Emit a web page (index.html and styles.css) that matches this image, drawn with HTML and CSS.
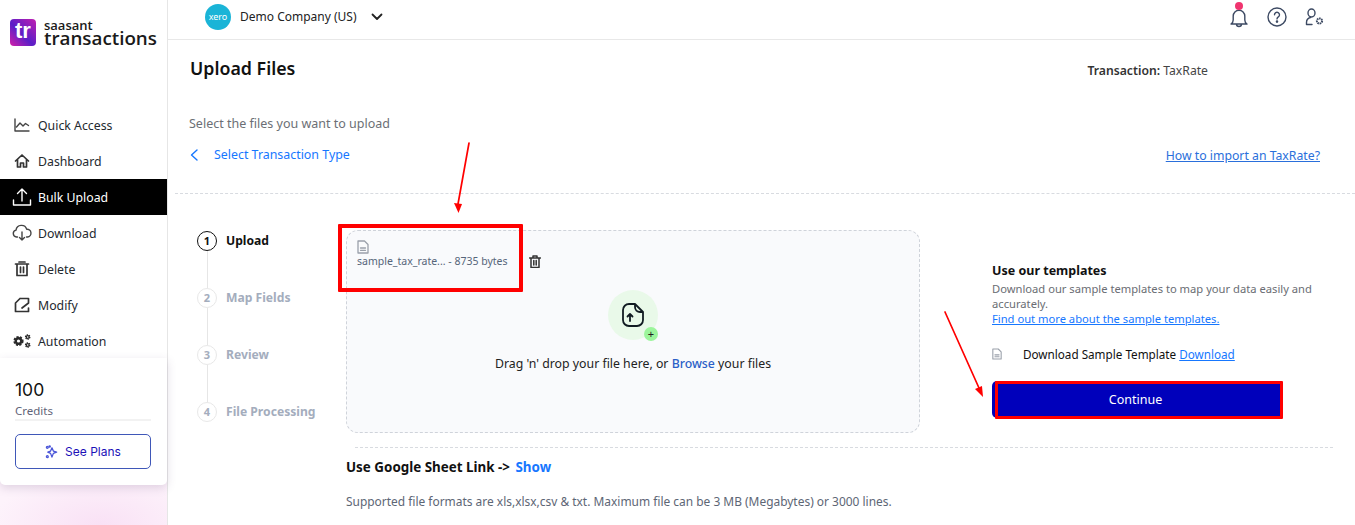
FILE: index.html
```html
<!DOCTYPE html>
<html lang="en">
  <head>
    <meta charset="UTF-8">
    <title>Upload Files</title>
    <link rel="stylesheet" href="styles.css">
  </head>
  <body>
    <aside class="sidebar">
      <div class="logo">
        <div class="logo-mark">tr</div>
        <div class="logo-text">
          <span class="logo-small">saasant</span>
          <span class="logo-big">transactions</span>
        </div>
      </div>
      <nav class="nav">
        <a class="nav-item">
          <svg viewBox="0 0 16 16"><path d="M1 2v12h14M2.5 10l3.5-4 3 3 2.5-2.5 3 2"/></svg>
          Quick Access
        </a>
        <a class="nav-item">
          <svg class="bold" viewBox="0 0 16 16"><path d="M1.5 8 8 2l6.5 6M3.5 6.5V14h3v-4h3v4h3V6.5"/></svg>
          Dashboard
        </a>
        <a class="nav-item active">
          <svg class="big" viewBox="0 0 20 20"><path d="M10 14V2M5.5 6.5 10 2l4.5 4.500M1.5 13v5h17v-5"/></svg>
          Bulk Upload
        </a>
        <a class="nav-item">
          <svg class="big" viewBox="0 0 20 20"><path d="M5.5 14H4.500a3.500 3.500 0 0 1-.5-6.900 5.500 5.500 0 0 1 10.700-.8 3.800 3.800 0 0 1 .8 7.700h-1M10 9v8M7.500 14.500 10 17l2.500-2.500"/></svg>
          Download
        </a>
        <a class="nav-item">
          <svg class="bold" viewBox="0 0 16 16"><path d="M1.5 3h13M3 3v11.500h10V3M5 1h6M6.500 6v5.500M9.500 6v5.500"/></svg>
          Delete
        </a>
        <a class="nav-item">
          <svg class="bold" viewBox="0 0 16 16"><path d="M6 1.500h8.500V6M6 1.500 1.500 6v8.500h13V11M8 11l6.500-5"/></svg>
          Modify
        </a>
        <a class="nav-item">
          <svg class="big gears" viewBox="0 0 20 20">
            <circle class="gear" cx="6.500" cy="10" r="3.900"/>
            <circle class="gear-sm" cx="15.700" cy="6" r="2.100"/>
            <circle class="gear-sm" cx="15.700" cy="14" r="2.100"/>
            <circle class="hole" cx="6.500" cy="10" r="1.600"/>
            <circle class="hole" cx="15.700" cy="6" r=".8"/>
            <circle class="hole" cx="15.700" cy="14" r=".8"/>
          </svg>
          Automation
        </a>
      </nav>
      <div class="credits">
        <div class="credits-num">100</div>
        <div class="credits-label">Credits</div>
        <button class="plans-btn">
          <svg viewBox="0 0 14 14"><path d="M7.500 2.500 9 6l3.500 1.200L9 8.500 7.500 12.500 6 8.500 3 7.200 6 6z"/><circle cx="2.500" cy="2" r="1"/><circle cx="2.500" cy="12" r="1"/><circle cx="5" cy="1" r=".7"/></svg>
          See Plans
        </button>
      </div>
    </aside>

    <div class="page">
      <header class="topbar">
        <div class="company">
          <div class="xero">xero</div>
          <span>Demo Company (US)</span>
          <svg class="chev" viewBox="0 0 12 8"><path d="M1.500 1.500 6 6l4.500-4.500"/></svg>
        </div>
        <div class="top-icons">
          <div class="bell">
            <svg viewBox="0 0 20 22"><path d="M2 18c1.500-1 2.200-2 2.200-4V10a5.800 5.800 0 0 1 11.600 0v4c0 2 .7 3 2.200 4zM7.500 18a2.500 2.500 0 0 0 5 0"/></svg>
            <span class="dot"></span>
          </div>
          <svg class="help" viewBox="0 0 20 20"><circle cx="10" cy="10" r="9"/><path d="M7.500 7.800a2.500 2.500 0 1 1 3.800 2.100c-.9.600-1.300 1-1.300 2"/><circle class="fill" cx="10" cy="14.600" r=".6"/></svg>
          <svg class="user-gear" viewBox="0 0 20 18"><ellipse cx="6.500" cy="5" rx="3.500" ry="4"/><path d="M7 16.500H1.500v-2c0-2.500 1.500-4.500 4-5"/><circle class="gear-ring" cx="14.500" cy="13" r="2.600"/></svg>
        </div>
      </header>

      <main class="content">
        <div class="title-row">
          <h1>Upload Files</h1>
          <div class="txn"><b>Transaction:</b> TaxRate</div>
        </div>
        <p class="hint">Select the files you want to upload</p>
        <div class="back-row">
          <a class="back">
            <svg viewBox="0 0 8 12"><path d="M7 1 1.500 6 7 11"/></svg>
            Select Transaction Type
          </a>
          <a class="howto">How to import an TaxRate?</a>
        </div>

        <div class="work">
          <ol class="steps">
            <li class="step current"><span class="num">1</span>Upload</li>
            <li class="step"><span class="num">2</span>Map Fields</li>
            <li class="step"><span class="num">3</span>Review</li>
            <li class="step"><span class="num">4</span>File Processing</li>
          </ol>

          <div class="dropzone">
            <div class="file-row">
              <div class="file-info">
                <svg class="doc" viewBox="0 0 12 14"><path d="M1 1h6.500L11 4.500V13H1zM3.500 8h5M3.500 10.300h5"/></svg>
                <div class="file-name">sample_tax_rate... - 8735 bytes</div>
              </div>
              <svg class="trash" viewBox="0 0 12 13"><path d="M.5 3h11M2 3v9.500h8V3M4 3V1h4v2M4.800 5.500v4.500M7.200 5.500v4.500"/></svg>
            </div>
            <div class="drop-main">
              <div class="upload-icon">
                <svg viewBox="0 0 22 24"><path d="M7 1h6l8 8v8a6 6 0 0 1-6 6H7a6 6 0 0 1-6-6V7a6 6 0 0 1 6-6zM13 1v3a5 5 0 0 0 5 5h3M8 18v-7M5.500 13.500 8 11l2.500 2.500"/></svg>
                <span class="plus">+</span>
              </div>
              <p class="drop-text">Drag 'n' drop your file here, or <a>Browse</a> your files</p>
            </div>
          </div>

          <div class="templates">
            <h2>Use our templates</h2>
            <p class="tpl-desc">Download our sample templates to map your data easily and accurately.</p>
            <a class="tpl-link">Find out more about the sample templates.</a>
            <div class="tpl-row">
              <svg class="doc" viewBox="0 0 12 14"><path d="M1 1h6.500L11 4.500V13H1zM3.500 8h5M3.500 10.300h5"/></svg>
              <span>Download Sample Template <a>Download</a></span>
            </div>
            <button class="continue">Continue</button>
          </div>
        </div>

        <div class="sheet-block">
          <div class="sheet-link"><b>Use Google Sheet Link -&gt;</b> <a>Show</a></div>
          <p class="formats">Supported file formats are xls,xlsx,csv &amp; txt. Maximum file can be 3 MB (Megabytes) or 3000 lines.</p>
        </div>
      </main>
    </div>

    <!-- red markup drawn on top of the screenshot -->
    <div class="mark mark-file"></div>
    <div class="mark mark-btn"></div>
    <svg class="arrows" viewBox="0 0 1355 525">
      <path d="M469 143 458 204"/>
      <path class="head" d="M454 203l8 1-3.500 9z"/>
      <path d="M945 312 979 388"/>
      <path class="head" d="M975 389l7-3 1 11z"/>
    </svg>
  </body>
</html>
```

FILE: styles.css
```css
* {
  box-sizing: border-box;
}

body {
  margin: 0;
  display: flex;
  height: 525px;
  overflow: hidden;
  font-family: "Noto Sans", "Open Sans", Arial, sans-serif;
  font-size: 12.3px;
  color: #111;
  background: #fff;
}

a {
  cursor: pointer;
}

svg {
  fill: none;
  stroke: currentColor;
  stroke-width: 1.4;
  stroke-linecap: round;
  stroke-linejoin: round;
  flex-shrink: 0;
}

/* sidebar */
.sidebar {
  width: 168px;
  flex-shrink: 0;
  display: flex;
  flex-direction: column;
  border-right: 1px solid #e6e6e6;
  background: radial-gradient(ellipse 120px 60px at 60% 100%, #f9e1f5, #fdf3fb 90%);
}

.logo {
  height: 107px;
  padding: 17px 0 0 10px;
  display: flex;
  gap: 8px;
  background: #fff;
}

.logo-mark {
  width: 26px;
  height: 27px;
  margin-top: 2px;
  border-radius: 4px;
  background: linear-gradient(45deg, #d31fa8, #5a1fc8 45%, #c21fb0);
  color: #fff;
  font-family: "Liberation Sans", sans-serif;
  font-weight: 700;
  font-size: 22px;
  line-height: 24px;
  text-align: center;
}

.logo-text {
  display: flex;
  flex-direction: column;
  font-family: "Open Sans", sans-serif;
  color: #1a1a1a;
}

.logo-small {
  margin-top: 3px;
  font-size: 13px;
  line-height: 10px;
  font-weight: 600;
}

.logo-big {
  font-size: 18.8px;
  line-height: 17px;
  font-weight: 600;
}

.nav {
  background: #fff;
}

.nav-item {
  height: 36px;
  padding-left: 14px;
  display: flex;
  align-items: center;
  gap: 8px;
  color: #24292f;
}

.nav-item svg {
  width: 16px;
  height: 16px;
  color: #444;
}

.nav-item svg.bold {
  stroke-width: 1.7;
  color: #333;
}

.nav-item svg.big {
  width: 20px;
  height: 20px;
  margin-left: -2px;
  margin-right: -2px;
}

.gears .gear {
  fill: #2a2a2a;
  stroke: #2a2a2a;
  stroke-width: 2.4;
  stroke-linecap: butt;
  stroke-dasharray: 2 1.2;
}

.gears .gear-sm {
  fill: #2a2a2a;
  stroke: #2a2a2a;
  stroke-width: 1.4;
  stroke-linecap: butt;
  stroke-dasharray: 1.2 .8;
}

.gears .hole {
  fill: #fff;
  stroke: none;
}

.nav-item.active {
  background: #000;
  color: #fff;
}

.nav-item.active svg {
  color: #fff;
}

.credits {
  height: 127px;
  margin-top: -1px;
  padding: 22px 16px 0 15px;
  background: #fff;
  border-radius: 0 0 5px 5px;
  box-shadow: 0 3px 10px rgba(90, 60, 110, 0.18);
}

.credits-num {
  font-family: Inter, sans-serif;
  font-size: 17.5px;
  line-height: 20px;
}

.credits-label {
  margin-top: 2px;
  border-bottom: 2px solid #f2f2f2;
  font-size: 11.5px;
  line-height: 17px;
  color: #5f6478;
}

.plans-btn {
  width: 136px;
  height: 35px;
  margin-top: 13px;
  padding: 0;
  display: flex;
  align-items: center;
  justify-content: center;
  gap: 7px;
  background: #fff;
  border: 1px solid #3f57b8;
  border-radius: 5px;
  color: #1c12b8;
  font-family: Inter, sans-serif;
  font-size: 12px;
}

.plans-btn svg {
  width: 13px;
  height: 14px;
  color: #4a55d8;
}

/* top bar */
.page {
  flex: 1;
  min-width: 0;
  display: flex;
  flex-direction: column;
}

.topbar {
  height: 40px;
  padding: 0 30px 0 37px;
  display: flex;
  align-items: center;
  justify-content: space-between;
  border-bottom: 1px solid #e8e8e8;
}

.company {
  display: flex;
  align-items: center;
  gap: 9px;
  margin-top: -6px;
  color: #222;
  font-size: 12px;
}

.xero {
  width: 26px;
  height: 26px;
  border-radius: 50%;
  background: #1ab4d7;
  color: #fff;
  font-size: 9px;
  line-height: 25px;
  text-align: center;
}

.chev {
  width: 12px;
  height: 8px;
  margin-left: 5px;
  stroke-width: 1.8;
}

.top-icons {
  display: flex;
  align-items: center;
  gap: 18px;
  margin-top: -6px;
  color: #3d4a63;
}

.bell {
  position: relative;
  width: 20px;
  height: 22px;
}

.bell svg {
  width: 20px;
  height: 22px;
}

.dot {
  position: absolute;
  top: -4px;
  left: 6px;
  width: 8px;
  height: 8px;
  border-radius: 50%;
  background: #f0346f;
}

.help {
  width: 20px;
  height: 20px;
}

.help .fill {
  fill: currentColor;
}

.user-gear {
  width: 20px;
  height: 18px;
}

.user-gear .gear-ring {
  stroke-width: 2;
  stroke-dasharray: 1.6 .7;
  stroke-linecap: butt;
}

/* content */
.content {
  flex: 1;
  min-width: 0;
}

.title-row {
  height: 59px;
  padding: 17px 147px 0 22px;
  display: flex;
  justify-content: space-between;
  align-items: flex-start;
}

h1 {
  margin: 0;
  font-size: 17.8px;
  line-height: 23px;
  font-weight: 600;
}

.txn {
  margin-top: 5px;
  color: #444;
  font-size: 12.2px;
}

.txn b {
  font-weight: 600;
  color: #333;
}

.hint {
  margin: 16px 0 0 21px;
  font-size: 12.5px;
  line-height: 17px;
  color: #6c6f75;
}

.back-row {
  height: 62px;
  margin-left: 7px;
  padding: 14px 35px 0 22px;
  display: flex;
  justify-content: space-between;
  align-items: flex-start;
  border-bottom: 1px dashed #d8dbe0;
}

.back {
  display: flex;
  align-items: center;
  gap: 16px;
  margin-left: -7px;
  font-size: 12.4px;
  color: #1677ff;
}

.back svg {
  width: 8px;
  height: 12px;
}

.howto {
  margin-top: 1px;
  color: #2a6fdb;
  font-size: 12.25px;
  text-decoration: underline;
}

.work {
  display: flex;
  height: 240px;
  padding-top: 36px;
}

.steps {
  width: 178px;
  margin: 0;
  padding: 1px 0 0 29px;
  font-size: 12.15px;
  list-style: none;
}

.step {
  position: relative;
  height: 57px;
  display: flex;
  align-items: flex-start;
  gap: 9px;
  font-weight: 700;
  line-height: 20px;
  color: #a4adbd;
}

.step:not(:last-child)::after {
  content: "";
  position: absolute;
  left: 10px;
  top: 20px;
  bottom: 0;
  width: 1px;
  background: #e6e6e6;
}

.num {
  width: 20px;
  height: 20px;
  border: 1px solid #e8e8e8;
  border-radius: 50%;
  font-size: 11px;
  line-height: 18px;
  text-align: center;
  background: #fff;
}

.step.current {
  color: #111;
}

.step.current .num {
  border-color: #111;
}

.dropzone {
  width: 574px;
  height: 203px;
  padding: 9px 10px;
  background: #f9fafc;
  border: 1px dashed #cfd3da;
  border-radius: 12px;
}

.file-row {
  display: flex;
  align-items: flex-end;
  gap: 21px;
}

.doc {
  display: block;
  width: 12px;
  height: 14px;
  color: #9aa0aa;
  stroke-width: 1.3;
}

.file-name {
  font-size: 10.5px;
  line-height: 15px;
  color: #56657a;
}

.trash {
  width: 12px;
  height: 13px;
  margin-bottom: 1px;
  color: #333;
  stroke-width: 1.5;
}

.drop-main {
  margin-top: 21px;
  display: flex;
  flex-direction: column;
  align-items: center;
}

.upload-icon {
  position: relative;
  width: 50px;
  height: 50px;
  display: flex;
  align-items: center;
  justify-content: center;
  border-radius: 50%;
  background: #e9f9e9;
  color: #111b22;
}

.upload-icon svg {
  width: 22px;
  height: 24px;
  stroke-width: 1.8;
}

.plus {
  position: absolute;
  right: 0;
  bottom: -1px;
  width: 14px;
  height: 14px;
  border-radius: 50%;
  background: #9cf59c;
  color: #222;
  font-size: 11px;
  line-height: 13px;
  text-align: center;
}

.drop-text {
  margin: 15px 0 0;
  line-height: 17px;
  color: #222;
}

.drop-text a {
  color: #2b5fc7;
  font-weight: 500;
}

.templates {
  width: 342px;
  margin-left: 72px;
  padding-top: 32px;
}

h2 {
  margin: 0 0 1px;
  font-size: 12.5px;
  line-height: 18px;
  font-weight: 700;
}

.tpl-desc {
  width: 330px;
  margin: 0;
  font-size: 11.2px;
  line-height: 15px;
  color: #6a6d73;
}

.tpl-link {
  display: block;
  font-size: 11.2px;
  line-height: 15px;
  color: #1677ff;
  text-decoration: underline;
}

.tpl-row {
  height: 18px;
  margin-top: 19px;
  display: flex;
  align-items: center;
  gap: 21px;
  font-size: 11.7px;
  color: #111;
}

.tpl-row a {
  color: #1677ff;
  text-decoration: underline;
}

.tpl-row .doc {
  width: 10px;
  height: 12px;
}

.continue {
  display: block;
  width: 290px;
  height: 37px;
  margin-top: 18px;
  padding: 0 3px 0 0;
  background: #0000bb;
  border: none;
  border-radius: 5px;
  color: #fff;
  font-family: inherit;
  font-size: 12.5px;
}

.sheet-block {
  margin: 13px 22px 0 179px;
}

.sheet-link {
  margin-left: 8px;
  padding-top: 9px;
  border-top: 1px dashed #d8dbe0;
  font-size: 13.4px;
  line-height: 20px;
  text-indent: -9px;
}

.sheet-link b {
  font-weight: 700;
}

.sheet-link a {
  margin-left: 2px;
  color: #1677ff;
  font-weight: 700;
}

.formats {
  margin: 16px 0 0 -1px;
  font-size: 11.95px;
  line-height: 17px;
  color: #5d6675;
}

/* red markup */
.mark {
  position: absolute;
  border: 4px solid #f00;
  border-radius: 1px;
}

.mark-file {
  left: 338px;
  top: 224px;
  width: 185px;
  height: 68px;
}

.mark-btn {
  left: 995px;
  top: 381px;
  width: 288px;
  height: 38px;
  border-width: 3px;
}

.arrows {
  position: absolute;
  left: 0;
  top: 0;
  width: 1355px;
  height: 525px;
  color: #f00;
  stroke-width: 1.7;
  pointer-events: none;
}

.arrows .head {
  fill: #f00;
  stroke: none;
}
```
